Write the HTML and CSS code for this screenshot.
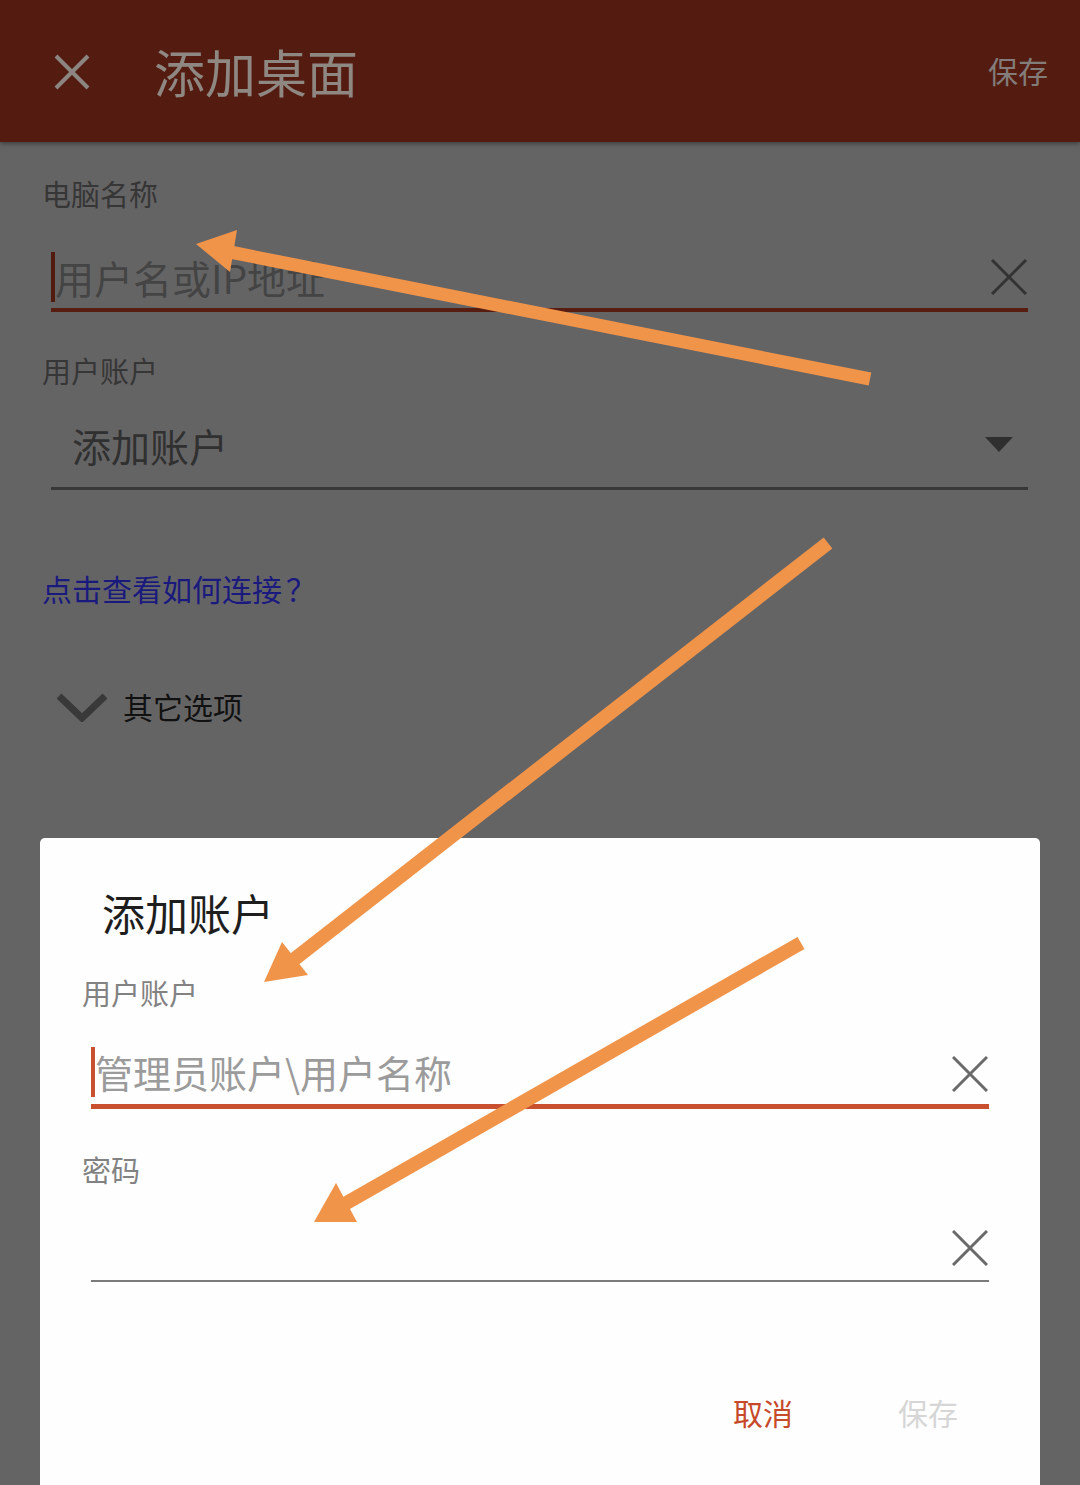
FILE: index.html
```html
<!DOCTYPE html>
<html lang="zh-CN">
<head>
<meta charset="utf-8">
<title>添加桌面</title>
<link rel="stylesheet" href="styles.css">
</head>
<body>
<div class="app">
  <header class="topbar">
    <svg class="close-icon" width="36" height="36" viewBox="0 0 36 36"><path d="M2 2 L34 34 M34 2 L2 34" stroke="#8c8581" stroke-width="4" fill="none"/></svg>
    <h1 class="title">添加桌面</h1>
    <span class="save">保存</span>
  </header>

  <main class="form">
    <div class="label first">电脑名称</div>
    <div class="input">
      <span class="cursor dim"></span>
      <span class="placeholder dim">用户名或IP地址</span>
      <svg class="clear" width="36" height="36" viewBox="0 0 36 36"><path d="M1 1 L35 35 M35 1 L1 35" stroke="#333" stroke-width="3" fill="none"/></svg>
    </div>

    <div class="label second">用户账户</div>
    <div class="select">
      <span class="select-value">添加账户</span>
      <svg class="caret" width="28" height="16" viewBox="0 0 28 16"><path d="M0 0 H28 L14 15 Z" fill="#2f2f2f"/></svg>
    </div>

    <a class="link">点击查看如何连接<span class="qmark">？</span></a>

    <div class="more">
      <svg class="chevron" width="50" height="30" viewBox="0 0 50 30"><path d="M2 4 L25 26 L48 4" stroke="#393939" stroke-width="7" fill="none"/></svg>
      <span class="more-text">其它选项</span>
    </div>
  </main>

  <section class="dialog">
    <h2 class="dialog-title">添加账户</h2>
    <div class="dlabel">用户账户</div>
    <div class="dinput active">
      <span class="cursor"></span>
      <span class="placeholder">管理员账户\用户名称</span>
      <svg class="clear" width="36" height="36" viewBox="0 0 36 36"><path d="M1 1 L35 35 M35 1 L1 35" stroke="#6a6a6a" stroke-width="3" fill="none"/></svg>
    </div>
    <div class="dlabel pw">密码</div>
    <div class="dinput password">
      <span class="placeholder"></span>
      <svg class="clear" width="36" height="36" viewBox="0 0 36 36"><path d="M1 1 L35 35 M35 1 L1 35" stroke="#6a6a6a" stroke-width="3" fill="none"/></svg>
    </div>
    <div class="actions">
      <span class="btn cancel">取消</span>
      <span class="btn disabled">保存</span>
    </div>
  </section>

  <svg class="arrows" width="1080" height="1485" viewBox="0 0 1080 1485">
    <g fill="#f0944a" stroke="#f0944a">
      <line x1="870" y1="379" x2="230" y2="252" stroke-width="13"/>
      <polygon points="196,244 237,230 230,272" stroke="none"/>
      <line x1="828" y1="543" x2="292" y2="961" stroke-width="14"/>
      <polygon points="264,982 282,942 308,975" stroke="none"/>
      <line x1="801" y1="943" x2="343" y2="1205" stroke-width="14"/>
      <polygon points="314,1222 336,1183 357,1222" stroke="none"/>
    </g>
  </svg>
</div>
</body>
</html>
```

FILE: styles.css
```css
* { box-sizing: border-box; margin: 0; padding: 0; }
html, body { width: 1080px; height: 1485px; overflow: hidden; }
body {
  background: #656465;
  font-family: "Noto Sans CJK SC", "Noto Sans", sans-serif;
}
.app { position: relative; width: 1080px; height: 1485px; }

.topbar {
  height: 142px;
  background: #541c11;
  display: flex;
  align-items: center;
  padding: 0 32px 0 54px;
  box-shadow: 0 2px 4px rgba(0,0,0,0.35);
}
.close-icon { flex: none; margin-top: 2px; }
.title {
  font-weight: 400;
  font-size: 51px;
  color: #8e8782;
  margin-left: 64px;
  line-height: 1;
}
.save {
  margin-left: auto;
  font-size: 30px;
  color: #827c7a;
  line-height: 1;
  margin-top: -2px;
}

.form { padding: 0 52px 0 42px; }
.label {
  font-size: 29px;
  line-height: 36px;
  color: #363636;
}
.label.first { margin-top: 33px; }
.label.second { margin-top: 40px; }

.input {
  margin-left: 9px;
  height: 101px;
  display: flex;
  align-items: flex-end;
  border-bottom: 4px solid #561d10;
  padding-bottom: 6px;
}
.cursor {
  width: 4px;
  height: 50px;
  background: #c9502e;
  flex: none;
}
.cursor.dim { background: #521b0f; }
.placeholder {
  font-size: 38px;
  color: #9b9b9b;
  line-height: 50px;
  flex: 1;
}
.placeholder.dim { color: #444; font-size: 39px; }
.clear { flex: none; margin-right: 1px; margin-bottom: 7px; }

.select {
  margin-left: 9px;
  height: 102px;
  display: flex;
  align-items: flex-end;
  border-bottom: 3px solid #383838;
  padding: 0 15px 22px 21px;
}
.select-value { flex: 1; font-size: 39px; color: #303030; line-height: 39px; }
.caret { flex: none; margin-bottom: 12px; }

.link {
  display: block;
  margin-top: 80px;
  font-size: 30px;
  line-height: 36px;
  color: #1a1a7e;
}
.qmark { margin-left: 4px; }

.more {
  display: flex;
  align-items: center;
  margin-top: 82px;
  padding-left: 15px;
}
.chevron { flex: none; margin-top: 2px; }
.more-text { margin-left: 16px; font-size: 30px; color: #111; line-height: 36px; }

.dialog {
  position: absolute;
  left: 40px;
  top: 838px;
  width: 1000px;
  bottom: 0;
  background: #fefefe;
  border-radius: 5px 5px 0 0;
  padding: 46px 51px 0 42px;
}
.dialog-title {
  font-weight: 400;
  font-size: 43px;
  line-height: 56px;
  color: #1e1e1e;
  padding-left: 20px;
}
.dlabel {
  margin-top: 34px;
  font-size: 29px;
  line-height: 36px;
  color: #828282;
}
.dlabel.pw { margin-top: 42px; }
.dinput {
  margin-left: 9px;
  height: 95px;
  display: flex;
  align-items: flex-end;
  border-bottom: 2px solid #7b7b7b;
  padding-bottom: 7px;
}
.dinput.active { border-bottom: 5px solid #c9502e; height: 99px; }
.dinput.active .clear { margin-bottom: 5px; }

.actions {
  display: flex;
  justify-content: flex-end;
  gap: 105px;
  margin-top: 112px;
  padding-right: 31px;
}
.btn { font-size: 30px; line-height: 36px; }
.btn.cancel { color: #c6492a; }
.btn.disabled { color: #d6d6d6; }

.arrows { position: absolute; left: 0; top: 0; pointer-events: none; }
```
